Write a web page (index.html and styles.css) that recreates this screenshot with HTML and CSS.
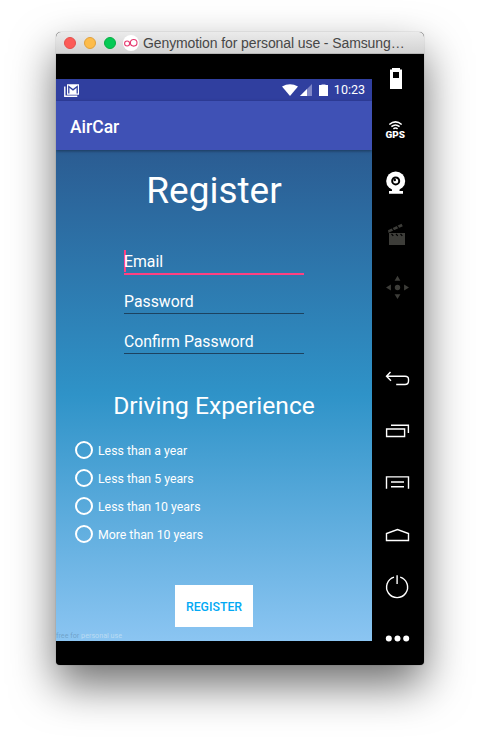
FILE: index.html
```html
<!DOCTYPE html>
<html lang="en">
<head>
<meta charset="utf-8">
<title>AirCar</title>
<link rel="stylesheet" href="styles.css">
</head>
<body>
<div class="window">
  <header class="titlebar">
    <span class="light red"></span>
    <span class="light amber"></span>
    <span class="light green"></span>
    <svg class="logo" viewBox="0 0 16 16"><circle cx="8" cy="8" r="8" fill="#fff"/><g fill="none" stroke="#e6386f" stroke-width="1.1"><circle cx="4.1" cy="8.500" r="2.500"/><circle cx="10.700" cy="7.800" r="3.300"/></g></svg>
    <span class="title">Genymotion for personal use - Samsung…</span>
  </header>
  <div class="device">
    <main class="screen">
      <div class="status">
        <svg class="mail" viewBox="0 0 16 13"><path d="M.8 2.500V12.200h12.500" fill="none" stroke="#fff" stroke-width="1.400"/><path d="M3 .2h12v10.600H3z" fill="#fff"/><path d="M4.800 9.500V2.500L9 5.800l4.200-3.300v7" fill="none" stroke="#303f9f" stroke-width="1.300"/></svg>
        <span class="grow"></span>
        <svg class="wifi" viewBox="0 0 16 12"><path d="M0 2.500Q8-2.200 16 2.500L8 12z" fill="#fff"/></svg>
        <svg class="signal" viewBox="0 0 12 12"><path d="M12 0v12H0z" fill="#7f86c7"/><path d="M7 5v7H0z" fill="#fff"/></svg>
        <svg class="batt" viewBox="0 0 9 12"><path d="M2.500 0h4v1.500h-4z" fill="#9299d0"/><path d="M0 1h9v11H0z" fill="#fff"/></svg>
        <span class="clock">10:23</span>
      </div>
      <div class="appbar">AirCar</div>
      <form class="content">
        <h1>Register</h1>
        <div class="fields">
          <div class="field active">Email</div>
          <div class="field">Password</div>
          <div class="field">Confirm Password</div>
        </div>
        <h2>Driving Experience</h2>
        <div class="options">
          <label><i></i><span>Less than a year</span></label>
          <label><i></i><span>Less than 5 years</span></label>
          <label><i></i><span>Less than 10 years</span></label>
          <label><i></i><span>More than 10 years</span></label>
        </div>
        <button type="button">REGISTER</button>
        <div class="mark"><span>free for</span> personal use</div>
      </form>
    </main>
    <aside class="tools">
      <div class="group">
        <svg viewBox="0 0 52 52"><path fill="#fff" fill-rule="evenodd" d="M20 14h8v1.500h2V35H18V15.500h2zM21 18v6h6v-6z"/></svg>
        <svg viewBox="0 0 52 52"><g fill="none" stroke="#fff" stroke-width="1.500"><path d="M17.300 18.500q6.200-5.200 12.400 0M19.400 20.700q4.100-3.400 8.200 0M21.400 22.900q2.100-1.800 4.200 0"/></g><text class="gps" x="13.500" y="32" textLength="19.500" lengthAdjust="spacingAndGlyphs">GPS</text></svg>
        <svg viewBox="0 0 52 52"><circle cx="23.700" cy="22.900" r="9.500" fill="#fff"/><path d="M20 30h7.500v3H31v2.700H17V33h3z" fill="#fff"/><circle cx="23.700" cy="22.900" r="4.500" fill="#000"/><circle cx="23.700" cy="22.900" r="2.500" fill="#fff"/><circle cx="22.800" cy="22" r="1.200" fill="#000"/></svg>
        <svg viewBox="0 0 52 52"><g fill="#3d3d39"><path d="M17 23h16v12H17z"/><path d="m16 20.200 13.500-6.500 1.300 2.600L18 22l-1.500 1z"/></g><path d="m19.500 24 1.800 1.900M24 24l1.800 1.900M28.500 24l1.800 1.900M20 18l2 3M25 15.500l2 3" stroke="#000" stroke-width="1.200"/></svg>
        <svg viewBox="0 0 52 52"><g fill="#3d3d39"><circle cx="25.500" cy="25.500" r="2.700"/><path d="m25.500 13.800 2.900 4.900h-5.800zM25.500 37l2.900-4.800h-5.800zM14 25.500l4.900-2.900v5.800zM37 25.500l-4.900-2.900v5.800z"/></g></svg>
      </div>
      <div class="group line">
        <svg viewBox="0 0 52 52"><path d="M18.500 20 14.500 24.300l4.500 4.500M14.800 24.300H33q3.500 0 3.500 3v1.700q0 3.500-3.500 3.500h-8.800"/></svg>
        <svg viewBox="0 0 52 52"><path d="M14.600 25h18v7.500h-18zM19 21.200h17.400V29"/></svg>
        <svg viewBox="0 0 52 52"><path d="M14.500 32.700V20.900h22v11.800M19 26h13M19 30.700h13"/></svg>
        <svg viewBox="0 0 52 52"><path d="M14.500 32.500v-7l11-4 11 4v7z"/></svg>
        <svg viewBox="0 0 52 52"><path d="M22 17.100a10.500 10.500 0 1 0 6.200 0M25.100 15.200v8.700"/></svg>
        <svg viewBox="0 0 52 52" class="dots"><circle cx="16.800" cy="26.500" r="3"/><circle cx="25.500" cy="26.500" r="3"/><circle cx="34.200" cy="26.500" r="3"/></svg>
      </div>
    </aside>
  </div>
</div>
</body>
</html>
```
FILE: styles.css
```css
* { box-sizing: border-box; }
body { margin: 0; height: 745px; overflow: hidden; background: #fff; font-family: Roboto, sans-serif; color: #fff; }
svg { display: block; flex: none; }
.window { width: 368px; height: 633px; margin: 32px 0 0 56px; display: flex; flex-direction: column; border-radius: 5px 5px 4px 4px; overflow: hidden; background: #000; box-shadow: 0 0 1px rgba(0,0,0,.5), 0 20px 44px rgba(0,0,0,.57); }
.titlebar { height: 22px; flex: none; display: flex; align-items: center; padding-left: 8px; background: linear-gradient(#ebebeb, #d3d3d3); border-bottom: 1px solid #b5b5b5; }
.light { width: 12px; height: 12px; border-radius: 50%; margin-right: 8px; border: 1px solid; }
.red { background: #fc5b57; border-color: #e2504c; }
.amber { background: #fdbc4b; border-color: #e0a03d; }
.green { background: #05ca56; border-color: #08ad42; }
.logo { width: 16px; height: 16px; margin-left: -1px; }
.title { font: 14px/21px "Liberation Sans", sans-serif; color: #474747; margin: 2px 0 0 4px; white-space: nowrap; letter-spacing: -.1px; }
.device { flex: 1; display: flex; }
.screen { width: 316px; height: 562px; margin-top: 25px; display: flex; flex-direction: column; }
.status { height: 22px; flex: none; display: flex; align-items: center; padding: 0 7px 0 8px; background: #303f9f; }
.mail { width: 16px; height: 13px; }
.grow { flex: 1; }
.wifi { width: 16px; height: 12px; }
.signal { width: 12px; height: 12px; margin-left: 2px; }
.batt { width: 9px; height: 12px; margin-left: 7px; }
.clock { font-size: 12.500px; font-weight: 400; line-height: 22px; margin-left: 6px; }
.appbar { height: 49px; flex: none; padding-left: 14px; font-size: 17.500px; font-weight: 500; line-height: 52px; background: #3f51b5; box-shadow: 0 1px 3px rgba(0,0,0,.4); z-index: 1; }
.content { height: 491px; display: flex; flex-direction: column; align-items: center; background: linear-gradient(#2b5c92, #2f93c8 50%, #8bc5f2); }
h1 { margin: 18px 0 0; font-size: 37px; font-weight: 400; line-height: 46px; }
.fields { width: 180px; margin-top: 34px; }
.field { height: 26px; margin-bottom: 14px; font-size: 15.800px; line-height: 27px; border-bottom: 1px solid #1c4260; }
.field.active { height: 27px; margin-bottom: 13px; border-bottom: 2px solid #ff4081; background: linear-gradient(#ff4081, #ff4081) 0 2px / 2px 22px no-repeat; }
h2 { margin: 21px 0 0; font-size: 24.600px; font-weight: 400; line-height: 34px; }
.options { align-self: stretch; padding-left: 19px; margin-top: 13px; }
.options label { display: flex; align-items: center; height: 28px; font-size: 12.300px; }
.options i { width: 18px; height: 18px; border: 2px solid #fff; border-radius: 50%; margin-right: 5px; }
.options span { padding-top: 2px; }
button { width: 78px; height: 42px; margin-top: 37px; flex: none; padding: 1px 0 0; border: 0; background: #fff; color: #03a9f4; font: 500 12.300px Roboto, sans-serif; }
.mark { align-self: flex-start; margin-top: 4px; font-size: 7.200px; line-height: 10px; color: rgba(220,235,245,.6); }
.mark span { color: rgba(80,120,150,.45); }
.tools { width: 52px; display: flex; flex-direction: column; justify-content: space-between; padding-bottom: 1px; }
.tools svg { width: 52px; height: 52px; }
.gps { font: 900 9px Roboto, sans-serif; fill: #fff; }
.line path { fill: none; stroke: #fff; stroke-width: 1.400; }
.dots { fill: #fff; }
```
